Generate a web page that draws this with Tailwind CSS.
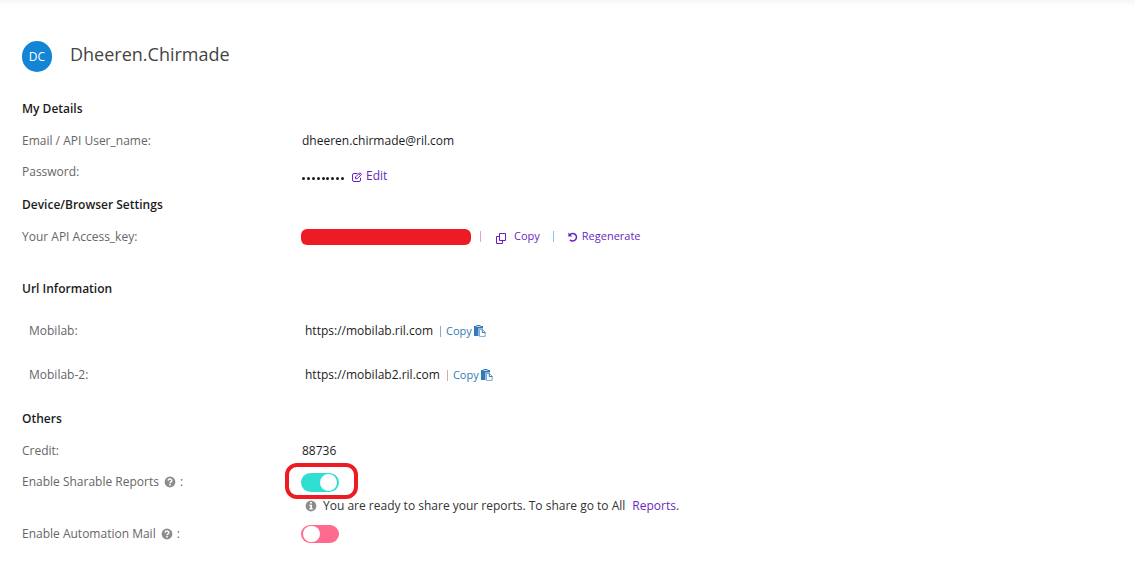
<!DOCTYPE html>
<html lang="en">
<head>
<meta charset="utf-8">
<meta name="viewport" content="width=device-width, initial-scale=1">
<title>Profile</title>
<script src="https://cdn.jsdelivr.net/npm/@tailwindcss/browser@4"></script>
</head>
<body class="bg-white font-['Open_Sans','Noto_Sans',sans-serif] text-xs text-[#1c1c1c]">
<svg class="hidden" aria-hidden="true">
  <symbol id="help" viewBox="0 0 12 12"><circle cx="6" cy="6" r="5.4" fill="#8c8c8c"/><path d="M4.1 4.6C4.2 2.5 7.9 2.5 7.8 4.7 7.8 5.9 6 5.9 6 7.2" fill="none" stroke="#fff" stroke-width="1.5"/><path d="M5.2 8h1.6v1.5H5.2z" fill="#fff"/></symbol>
  <symbol id="paste" viewBox="0 0 12 12"><path d="M0 1h2.500V0h4v1H9v2.500H4.500V11H0z" fill="#337ab7"/><path d="M2.500 1.500h4" stroke="#fff" stroke-width=".7"/><path d="M5.500 4.500h3l2.700 2.700v4.200H5.500z" fill="#fff" stroke="#7ba9d2"/><path d="M8.300 4.500v3h3" fill="none" stroke="#337ab7"/></symbol>
</svg>
<main class="px-[22px] pb-8 shadow-[inset_0_8px_8px_-8px_rgba(0,0,0,0.08)]">
  <header class="flex items-center gap-[18px] pt-10">
    <div class="flex h-[31px] w-[30px] items-center justify-center rounded-full bg-[#1385d4] pt-px text-white">DC</div>
    <h1 class="pb-1 text-lg text-[#444]">Dheeren.Chirmade</h1>
  </header>

  <section class="mt-[21px]">
    <h2 class="flex h-8 items-center font-semibold">My Details</h2>
    <dl>
      <div class="grid h-[31px] grid-cols-[280px_1fr] items-center"><dt class="text-[#666]">Email / API User_name:</dt><dd>dheeren.chirmade@ril.com</dd></div>
      <div class="grid h-8 grid-cols-[280px_1fr] items-center"><dt class="text-[#666]">Password:</dt>
        <dd class="flex items-center pt-2">
          <span class="flex w-[42px] justify-between pt-1" role="img" aria-label="Password hidden"><i class="size-[3px] rounded-full bg-[#1c1c1c]"></i><i class="size-[3px] rounded-full bg-[#1c1c1c]"></i><i class="size-[3px] rounded-full bg-[#1c1c1c]"></i><i class="size-[3px] rounded-full bg-[#1c1c1c]"></i><i class="size-[3px] rounded-full bg-[#1c1c1c]"></i><i class="size-[3px] rounded-full bg-[#1c1c1c]"></i><i class="size-[3px] rounded-full bg-[#1c1c1c]"></i><i class="size-[3px] rounded-full bg-[#1c1c1c]"></i><i class="size-[3px] rounded-full bg-[#1c1c1c]"></i></span>
          <button class="ml-2 flex items-center gap-1 text-[#6a1fc2]"><svg class="mt-px size-[10px]" viewBox="0 0 10 10" fill="none" stroke="currentColor"><path d="M5.500 1.500H2a1.500 1.500 0 0 0-1.500 1.500v5A1.500 1.500 0 0 0 2 9.500h5A1.500 1.500 0 0 0 8.500 8V5.800"/><path d="M3.500 5 7.800.700 9.500 2.400 5.200 6.700H3.500zM6.800 1.700l1.700 1.700"/></svg>Edit</button>
        </dd></div>
    </dl>
  </section>

  <section class="mt-px">
    <h2 class="flex h-8 items-center font-semibold">Device/Browser Settings</h2>
    <dl>
      <div class="grid h-[31px] grid-cols-[280px_1fr] items-center"><dt class="text-[#666]">Your API Access_key:</dt>
        <dd class="flex items-center text-[11px] text-[#6a1fc2]">
          <span class="-ml-px h-4 w-[170px] rounded-md bg-[#ed1c24]"></span>
          <span class="ml-[9px] h-[11px] w-px bg-[#e3a3d6]"></span>
          <button class="ml-[14px] flex items-center gap-[7px]"><svg class="mt-[2px] size-3" viewBox="0 0 12 12" fill="none" stroke="currentColor"><path d="M4.500 1.500h6v7h-6z"/><path d="M4.500 4.500h-3v7h6v-3"/></svg>Copy</button>
          <span class="ml-[13px] h-[11px] w-px bg-[#8cc0f5]"></span>
          <button class="ml-[14px] flex items-center gap-1"><svg class="size-[10px]" viewBox="0 0 10 10" fill="none" stroke="currentColor" stroke-width="1.500"><path d="M1.800 2.700A3.800 3.800 0 1 1 2 7.900"/><path d="M.400.500v3.900h3.900z" fill="currentColor" stroke="none"/></svg>Regenerate</button>
        </dd></div>
    </dl>
  </section>

  <section class="mt-[21px]">
    <h2 class="flex h-8 items-center font-semibold">Url Information</h2>
    <table class="mt-1 ml-[7px]">
      <tbody>
        <tr class="h-11"><th scope="row" class="w-[276px] text-left font-normal text-[#666]">Mobilab:</th><td><div class="flex items-center"><span>https://mobilab.ril.com</span><span class="ml-[7px] h-[11px] w-px bg-[#88a8d8]"></span><button class="ml-[5px] flex items-center gap-[2px] text-[11px] text-[#337ab7]">Copy<svg class="size-3"><use href="#paste"/></svg></button></div></td></tr>
        <tr class="h-11"><th scope="row" class="w-[276px] text-left font-normal text-[#666]">Mobilab-2:</th><td><div class="flex items-center"><span>https://mobilab2.ril.com</span><span class="ml-[7px] h-[11px] w-px bg-[#dba7b4]"></span><button class="ml-[5px] flex items-center gap-[2px] text-[11px] text-[#337ab7]">Copy<svg class="size-3"><use href="#paste"/></svg></button></div></td></tr>
      </tbody>
    </table>
  </section>

  <section class="mt-[6px]">
    <h2 class="flex h-8 items-center font-semibold">Others</h2>
    <div class="grid h-8 grid-cols-[280px_1fr] items-center"><span class="text-[#666]">Credit:</span><span>88736</span></div>
    <div class="grid h-[30px] grid-cols-[280px_1fr] items-center">
      <label for="share" class="flex items-center text-[#666]">Enable Sharable Reports<svg class="mr-1 ml-[5px] size-3"><use href="#help"/></svg>:</label>
      <div class="relative flex items-center">
        <input id="share" type="checkbox" role="switch" checked class="-ml-px h-[19px] w-[38px] appearance-none rounded-full bg-[#ff6b8f] before:m-px before:block before:size-[17px] before:rounded-full before:bg-white checked:bg-[#2fdfd2] checked:before:ml-[19px]">
        <span class="pointer-events-none absolute -top-[10px] -left-[17px] h-9 w-[73px] rounded-xl border-4 border-[#ed1c24]"></span>
      </div>
    </div>
    <p class="ml-[283px] flex h-[17px] items-center text-[#333]"><svg class="mr-[6px] size-3" viewBox="0 0 12 12"><circle cx="6" cy="6" r="5.400" fill="#8c8c8c"/><path d="M5 2h2v1.500H5zM4.300 4.700H7v3.600h.800v1.200H4.300V8.300h.900V5.900h-.900z" fill="#fff"/></svg>You are ready to share your reports. To share go to All<a href="#reports" class="ml-[7px] text-[#6a1fc2]">Reports</a>.</p>
    <div class="mt-1 grid h-8 grid-cols-[280px_1fr] items-center">
      <label for="mail" class="flex items-center text-[#666]">Enable Automation Mail<svg class="mr-1 ml-[5px] size-3"><use href="#help"/></svg>:</label>
      <div class="flex items-center"><input id="mail" type="checkbox" role="switch" class="-ml-px h-[18px] w-[38px] appearance-none rounded-full bg-[#ff6b8f] before:m-px before:ml-[2px] before:block before:h-4 before:w-[17px] before:rounded-full before:bg-white checked:bg-[#2fdfd2] checked:before:ml-[19px]"></div>
    </div>
  </section>
</main>
</body>
</html>
